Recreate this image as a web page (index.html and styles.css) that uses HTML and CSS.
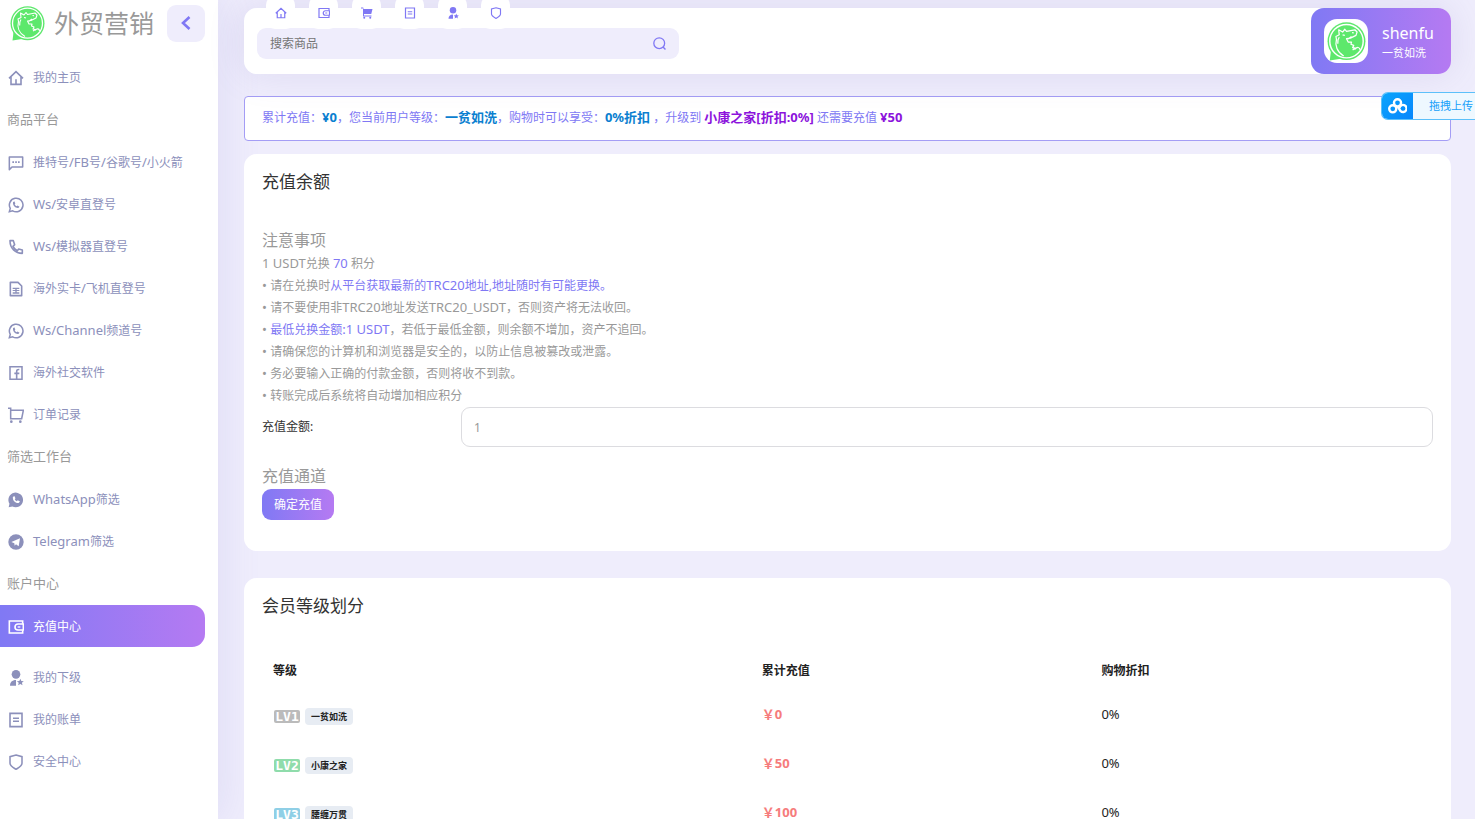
FILE: index.html
```html
<!DOCTYPE html>
<html lang="zh-CN">
<head>
<meta charset="utf-8">
<title>充值中心</title>
<link rel="stylesheet" href="styles.css">
</head>
<body>
<svg class="defs" width="0" height="0" aria-hidden="true">
  <symbol id="home" viewBox="0 0 24 24"><path d="M1.500 12.500 12 2.500l10.500 10M4.500 10v11.500h15V10M12 21v-7" fill="none" stroke="currentColor" stroke-width="2.400"/></symbol>
  <symbol id="chat" viewBox="0 0 24 24"><path d="M2 22V3h20v15H6z" fill="none" stroke="currentColor" stroke-width="2.300" stroke-linejoin="round"/><path d="M6.500 9.500h2.500v2.500H6.500zM10.800 9.500h2.500v2.500h-2.500zM15 9.500h2.500v2.500H15z" fill="currentColor"/></symbol>
  <symbol id="wa" viewBox="0 0 24 24"><path d="M2 22l1.400-5A10.200 10.200 0 1 1 7 20.700z" fill="none" stroke="currentColor" stroke-width="2.300"/><path d="M9.500 6.500 7.500 8c-.5 5 3.500 9 8 8.500l1.800-2-3-1.800-1.300 1.200c-1.400-.6-2.400-1.700-3-3l1-1.300z" fill="currentColor"/></symbol>
  <symbol id="wa-fill" viewBox="0 0 24 24"><path d="M1 23l1.200-5.300A11 11 0 1 1 6.500 21.700z" fill="currentColor"/><path d="M9.500 6 7.300 7.600c-.5 5.400 3.700 9.500 8.700 9l2-2.200-3.400-2-1.400 1.300c-1.400-.6-2.400-1.700-3-3l1-1.500z" fill="#fff"/></symbol>
  <symbol id="tg" viewBox="0 0 24 24"><circle cx="12" cy="12" r="11.500" fill="currentColor"/><path d="M5 12l13-5.500-2 12-4-3-2 2-.5-3.500z" fill="#fff"/></symbol>
  <symbol id="phone" viewBox="0 0 24 24"><path d="M3 2.500h5l2 6-2.500 2.500c1.300 3 3.500 5 6.500 6.500l2-2.500 5.500 1.500v5C11 21.500 3 14 3 2.500z" fill="none" stroke="currentColor" stroke-width="2.400" stroke-linejoin="round"/></symbol>
  <symbol id="sim" viewBox="0 0 24 24"><path d="M3.500 2H15l5.500 5.500V22h-17z" fill="none" stroke="currentColor" stroke-width="2.400" stroke-linejoin="round"/><path d="M7 10h10v2H7zM7 13.500h4V15H7zM7 17h4v2H7zM13 13.500h4V15h-4zM13 17h4v2h-4zM11 10h2v9h-2z" fill="currentColor"/></symbol>
  <symbol id="fb" viewBox="0 0 24 24"><path d="M3 2.500h18v19H3z" fill="none" stroke="currentColor" stroke-width="2.300"/><path d="M13 21V10c0-2.500 1-3.500 4-3.300M9.500 12.500H17" fill="none" stroke="currentColor" stroke-width="2.400"/></symbol>
  <symbol id="cart" viewBox="0 0 24 24"><path d="M0 2h4v15.500h16.500L23 5H5" fill="none" stroke="currentColor" stroke-width="2.300"/><circle cx="5" cy="22" r="2" fill="currentColor"/><circle cx="18.500" cy="22" r="2" fill="currentColor"/></symbol>
  <symbol id="cart-fill" viewBox="0 0 24 24"><path d="M0 1h4.500l.5 3h18l-2.500 10H6v3h15v2H4V3H0z" fill="currentColor"/><circle cx="6.500" cy="21.500" r="2" fill="currentColor"/><circle cx="18.500" cy="21.500" r="2" fill="currentColor"/></symbol>
  <symbol id="wallet" viewBox="0 0 24 24"><path d="M22 7V3H2v18h20v-4" fill="none" stroke="currentColor" stroke-width="2.400"/><path d="M23 7.500h-8a4.500 4.500 0 0 0 0 9h8z" fill="none" stroke="currentColor" stroke-width="2.400"/><path d="M14.500 11h4v2h-4z" fill="currentColor"/></symbol>
  <symbol id="user" viewBox="0 0 24 24"><circle cx="12" cy="6.500" r="6.500" fill="currentColor"/><path d="M3 23.500c0-5 3-8.500 9-8.500v8.500zM18.500 13l1.500 3.500 3.700.3-2.800 2.500.9 3.700-3.300-2-3.300 2 .9-3.700-2.800-2.500 3.700-.3z" fill="currentColor"/></symbol>
  <symbol id="bill" viewBox="0 0 24 24"><path d="M3 2h18v20H3z" fill="none" stroke="currentColor" stroke-width="2.400"/><path d="M7.500 9.500h9M7.500 14h9" stroke="currentColor" stroke-width="2.200"/></symbol>
  <symbol id="shield" viewBox="0 0 24 24"><path d="M12 1.500l9 2.500v10c0 4-5 6.500-9 9-4-2.500-9-5-9-9V4z" fill="none" stroke="currentColor" stroke-width="2.300"/></symbol>
  <symbol id="search" viewBox="0 0 24 24"><circle cx="11.500" cy="11.500" r="10" fill="none" stroke="currentColor" stroke-width="2.400"/><path d="M18.500 18.500l4.500 4.500" stroke="currentColor" stroke-width="2.600"/></symbol>
  <symbol id="logo" viewBox="0 0 35 35"><circle cx="17.500" cy="17.200" r="17" fill="#5de86c"/><path d="M4 22 2.500 34.500 15 32.500z" fill="#5de86c"/><circle cx="17.500" cy="17.200" r="15" fill="none" stroke="#fff" stroke-width="1.300"/><path d="M15 30.500C9 27 7 21 8.500 15.500L8 13l3-1.500-.5-4.500 3.500 2 2-2.500 1.500 2L25 7l2 2-1 3-5 2.500-3.500.5 1.500 3h3l-.5 2 2.500 1-1 2 2.500.5-2.500 1.500M25 24.500c2-2.500 4.500-2 4.500.500M14 11.500l2 .5M22.500 9.500l1.500.2M19 15.200l3-2.200M11 13.500c-1.500 2-1.500 3.500-1.300 6" fill="none" stroke="#fff" stroke-width="1.100" stroke-linejoin="round"/></symbol>
</svg>

<div class="page">
  <aside class="sidebar">
    <div class="brand">
      <svg class="brand-logo"><use href="#logo"/></svg>
      <span class="brand-name">外贸营销</span>
      <button class="collapse" type="button" aria-label="收起"><svg viewBox="0 0 12 16"><path d="M9.500 2 3 8l6.500 6" fill="none" stroke="currentColor" stroke-width="2.600"/></svg></button>
    </div>
    <nav class="menu">
      <a class="item" href="#"><svg><use href="#home"/></svg>我的主页</a>
      <h2 class="section">商品平台</h2>
      <a class="item" href="#"><svg><use href="#chat"/></svg><span>推特号<span class="latin">/FB</span>号<span class="latin">/</span>谷歌号<span class="latin">/</span>小火箭</span></a>
      <a class="item" href="#"><svg><use href="#wa"/></svg><span><span class="latin">Ws/</span>安卓直登号</span></a>
      <a class="item" href="#"><svg><use href="#phone"/></svg><span><span class="latin">Ws/</span>模拟器直登号</span></a>
      <a class="item" href="#"><svg><use href="#sim"/></svg><span>海外实卡<span class="latin">/</span>飞机直登号</span></a>
      <a class="item" href="#"><svg><use href="#wa"/></svg><span><span class="latin">Ws/Channel</span>频道号</span></a>
      <a class="item" href="#"><svg><use href="#fb"/></svg>海外社交软件</a>
      <a class="item" href="#"><svg><use href="#cart"/></svg>订单记录</a>
      <h2 class="section">筛选工作台</h2>
      <a class="item" href="#"><svg><use href="#wa-fill"/></svg><span><span class="latin">WhatsApp</span>筛选</span></a>
      <a class="item" href="#"><svg><use href="#tg"/></svg><span><span class="latin">Telegram</span>筛选</span></a>
      <h2 class="section">账户中心</h2>
      <a class="item active" href="#"><svg><use href="#wallet"/></svg>充值中心</a>
      <a class="item" href="#"><svg><use href="#user"/></svg>我的下级</a>
      <a class="item" href="#"><svg><use href="#bill"/></svg>我的账单</a>
      <a class="item" href="#"><svg><use href="#shield"/></svg>安全中心</a>
    </nav>
  </aside>

  <main class="main">
    <header class="topbar">
      <nav class="tabs">
        <a href="#" aria-label="主页"><svg><use href="#home"/></svg></a>
        <a href="#" aria-label="充值"><svg><use href="#wallet"/></svg></a>
        <a href="#" aria-label="订单"><svg><use href="#cart-fill"/></svg></a>
        <a href="#" aria-label="账单"><svg><use href="#bill"/></svg></a>
        <a href="#" aria-label="下级"><svg><use href="#user"/></svg></a>
        <a href="#" aria-label="安全"><svg><use href="#shield"/></svg></a>
      </nav>
      <form class="search">
        <input type="text" placeholder="搜索商品" aria-label="搜索商品">
        <button type="button" aria-label="搜索"><svg><use href="#search"/></svg></button>
      </form>
      <div class="profile">
        <span class="avatar"><svg><use href="#logo"/></svg></span>
        <div><div class="user-name">shenfu</div><div class="user-level">一贫如洗</div></div>
      </div>
    </header>

    <p class="notice">累计充值：<b>¥0</b>，您当前用户等级：<b>一贫如洗</b>，购物时可以享受：<b>0%折扣</b> ，升级到 <b class="next">小康之家[折扣:0%]</b> 还需要充值 <b class="next">¥50</b></p>

    <section class="card recharge">
      <h1>充值余额</h1>
      <h3>注意事项</h3>
      <p><span class="latin">1 USDT</span>兑换 <em class="latin">70</em> 积分</p>
      <p><span class="latin">• </span>请在兑换时<em>从平台获取最新的<span class="latin">TRC20</span>地址,地址随时有可能更换。</em></p>
      <p><span class="latin">• </span>请不要使用非<span class="latin">TRC20</span>地址发送<span class="latin">TRC20_USDT</span>，否则资产将无法收回。</p>
      <p><span class="latin">• </span><em>最低兑换金额<span class="latin">:1 USDT</span></em>，若低于最低金额，则余额不增加，资产不追回。</p>
      <p><span class="latin">• </span>请确保您的计算机和浏览器是安全的，以防止信息被篡改或泄露。</p>
      <p><span class="latin">• </span>务必要输入正确的付款金额，否则将收不到款。</p>
      <p><span class="latin">• </span>转账完成后系统将自动增加相应积分</p>
      <div class="field">
        <label for="amount">充值金额:</label>
        <input id="amount" type="text" value="1">
      </div>
      <h3>充值通道</h3>
      <button class="submit" type="button">确定充值</button>
    </section>

    <section class="card levels">
      <h1>会员等级划分</h1>
      <table>
        <thead><tr><th>等级</th><th>累计充值</th><th>购物折扣</th></tr></thead>
        <tbody>
          <tr><td><div class="level lv1"><span class="lv">LV1</span><span class="badge">一贫如洗</span></div></td><td class="price">￥0</td><td>0%</td></tr>
          <tr><td><div class="level lv2"><span class="lv">LV2</span><span class="badge">小康之家</span></div></td><td class="price">￥50</td><td>0%</td></tr>
          <tr><td><div class="level lv3"><span class="lv">LV3</span><span class="badge">腰缠万贯</span></div></td><td class="price">￥100</td><td>0%</td></tr>
        </tbody>
      </table>
    </section>
  </main>

  <button class="uploader" type="button">
    <span class="uploader-icon"><svg viewBox="0 0 24 20"><g fill="none" stroke="#fff" stroke-width="3"><circle cx="12" cy="6" r="4.500"/><circle cx="6" cy="13.500" r="4.500"/><path d="M12 10.500l4 6a4.500 4.500 0 1 0-1.500-4"/></g></svg></span>
    <span class="uploader-text">拖拽上传</span>
  </button>
</div>
</body>
</html>
```

FILE: styles.css
```css
* { box-sizing: border-box; }

html { scrollbar-width: none; }

body {
  margin: 0;
  background: #efedfc;
  color: #999;
  font: 12px/22px "Noto Sans", "Noto Sans CJK SC", sans-serif;
}

h1, h2, h3, p { margin: 0; font-weight: 400; }
a { color: inherit; text-decoration: none; }
button, input { font: inherit; color: inherit; border: 0; background: none; padding: 0; }
em { font-style: normal; color: #8078f4; }
.defs { position: absolute; }
.latin { font-size: 13px; line-height: 1; }

.page {
  position: relative;
  display: flex;
  height: 100vh;
  overflow: hidden;
}

.sidebar {
  flex: none;
  width: 218px;
  background: #fff;
  box-shadow: 0 0 40px rgba(120, 110, 200, 0.16);
}

.brand {
  display: flex;
  align-items: center;
  height: 56px;
  padding: 0 13px 10px 10px;
}
.brand-logo { width: 35px; height: 35px; }
.brand-name { margin-left: 9px; font-size: 25px; line-height: 34px; }
.collapse {
  display: grid;
  place-items: center;
  width: 38px;
  height: 37px;
  margin-left: auto;
  border-radius: 9px;
  background: #efedfc;
  color: #8078f4;
}
.collapse svg { width: 12px; height: 16px; }

.item {
  display: flex;
  align-items: center;
  gap: 9px;
  height: 42px;
  padding: 1px 0 0 8px;
  color: #8c90bb;
}
.item svg { width: 16px; height: 16px; }
.section {
  height: 43px;
  padding-left: 7px;
  font-size: 13px;
  line-height: 43px;
}
.item.active {
  margin: 0 13px 9px 0;
  border-radius: 0 13px 13px 0;
  background: linear-gradient(90deg, #8079f4, #b57af2);
  color: #fff;
}

.main {
  flex: 1;
  min-width: 0;
  padding: 8px 24px 0 26px;
}

.topbar {
  position: relative;
  display: flex;
  align-items: flex-start;
  height: 66px;
  padding-left: 13px;
  border-radius: 13px;
  background: #fff;
  box-shadow: 0 0 36px rgba(120, 110, 180, 0.15);
}
.tabs {
  position: absolute;
  top: -12px;
  left: 22px;
  display: flex;
  gap: 14px;
  color: #8078f4;
}
.tabs a {
  display: grid;
  place-items: center;
  width: 29px;
  height: 33px;
  border-radius: 9px;
  background: #fff;
}
.tabs svg { width: 12px; height: 12px; }
.search {
  display: flex;
  align-items: center;
  width: 36%;
  max-width: 422px;
  height: 31px;
  margin-top: 20px;
  padding: 0 13px;
  border-radius: 9px;
  background: #efedfc;
  color: #8078f4;
}
.search input { flex: 1; min-width: 0; outline: 0; }
.search input::placeholder { color: #757575; opacity: 1; }
.search button { display: flex; }
.search svg { width: 13px; height: 13px; }

.profile {
  display: flex;
  align-items: center;
  gap: 14px;
  width: 140px;
  height: 66px;
  margin-left: auto;
  padding-left: 13px;
  border-radius: 13px;
  background: linear-gradient(90deg, #8079f4, #b57af2);
  color: #fff;
}
.avatar {
  display: grid;
  place-items: center;
  width: 44px;
  height: 44px;
  border-radius: 13px;
  background: #fff;
}
.avatar svg { width: 39px; height: 39px; }
.user-name { font-size: 16px; line-height: 22px; }
.user-level { font-size: 11px; line-height: 17px; }

.notice {
  margin-top: 22px;
  padding: 10px 17px 12px;
  border: 1px solid #a49df5;
  border-radius: 4px;
  background: #fff;
  color: #8078f4;
  line-height: 21px;
}
.notice b { color: #0b7fd0; font-size: 13px; line-height: 1; }
.notice .next { color: #8c14dc; }

.card {
  padding: 16px 18px;
  border-radius: 13px;
  background: #fff;
}
.card h1 { font-size: 17px; line-height: 24px; color: #333; }
.card h3 { font-size: 16px; line-height: 26px; }

.recharge { margin-top: 13px; padding-bottom: 31px; }
.recharge h1 { margin-bottom: 33px; }
.field {
  display: grid;
  grid-template-columns: 17% 1fr;
  align-items: center;
  margin-bottom: 16px;
}
.field label { color: #333; }
.field input {
  height: 40px;
  padding: 0 12px;
  border: 1px solid #dcdce0;
  border-radius: 9px;
  color: #999;
}
.submit {
  display: block;
  width: 72px;
  height: 31px;
  border-radius: 9px;
  background: linear-gradient(90deg, #8079f4, #b57af2);
  color: #fff;
}

.levels { margin-top: 27px; }
table {
  width: 100%;
  margin-top: 34px;
  border-collapse: collapse;
  table-layout: fixed;
  color: #222;
}
th, td { height: 49px; padding: 0 8px; text-align: left; }
th:first-child, td:first-child { padding-left: 11px; }
th:first-child { width: 42%; }
th:nth-child(2) { width: 29%; }
th { height: 37px; font-weight: 700; }
td { font-size: 13px; }
.price { color: #f67c7c; font-weight: 700; }
.level { display: flex; align-items: center; gap: 5px; padding: 6px 0 0 1px; }
.lv {
  width: 26px;
  height: 13px;
  border-radius: 2px;
  background: #bbb;
  color: #fff;
  font: 700 13px/13px "DejaVu Sans Mono", monospace;
  text-align: center;
}
.lv2 .lv { background: #8fdcab; }
.lv3 .lv { background: #8fcfe6; }
.badge {
  padding: 0 6px;
  border-radius: 4px;
  background: #e7ecf3;
  color: #222;
  font-size: 9px;
  font-weight: 700;
  line-height: 17px;
}

.uploader {
  position: absolute;
  top: 92px;
  right: 0;
  display: flex;
  height: 28px;
  width: 94px;
  overflow: hidden;
  border: 1px solid #5cc0fa;
  border-right: 0;
  border-radius: 7px 0 0 7px;
  background: #eef8ff;
  color: #16a0fa;
}
.uploader-icon {
  display: grid;
  place-items: center;
  width: 31px;
  height: 26px;
  background: linear-gradient(135deg, #0aa4fc, #0886fc);
}
.uploader-icon svg { width: 19px; height: 16px; }
.uploader-text { margin-left: 16px; font-size: 11px; line-height: 26px; white-space: nowrap; }
```
